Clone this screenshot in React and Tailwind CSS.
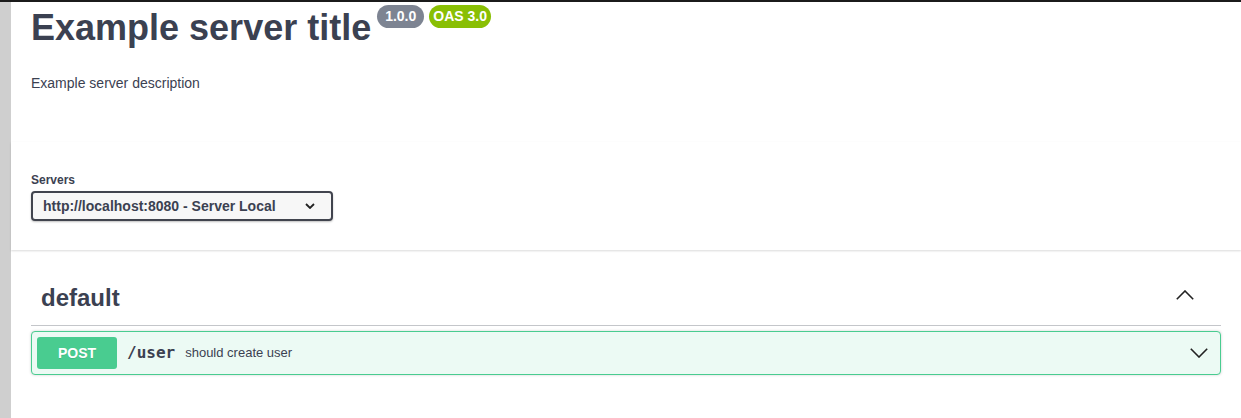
import React from 'react';

const sans = "font-['Liberation_Sans',Arial,sans-serif]";

function Chevron({ up = false, className = '' }) {
  return (
    <svg width="18" height="10" viewBox="0 0 18 10" className={className} fill="none">
      <polyline
        points={up ? '0.8,9.2 9,1 17.2,9.2' : '0.8,0.8 9,9 17.2,0.8'}
        stroke="#222"
        strokeWidth="1.6"
      />
    </svg>
  );
}

function Badge({ children, className }) {
  return (
    <span className={`inline-block rounded-full h-[23px] leading-[23px] text-center text-[14px] font-bold text-white ${className}`}>
      {children}
    </span>
  );
}

export default function App() {
  return (
    <div className={`w-[1241px] h-[418px] overflow-hidden bg-white text-[#3b4151] ${sans}`}>
      <div className="h-[2px] bg-[#1b1b1b]" />
      <div className="flex h-[416px]">
        <div className="w-[11px] bg-[#cfcfcf]" />
        <div className="flex-1">
          {/* info */}
          <div className="pl-[20px]">
            <div className="flex items-start">
              <h2 className="pt-[8px] text-[36px] leading-[36px] font-bold">Example server title</h2>
              <div className="mt-[3px] ml-[6px] flex gap-[5px]">
                <Badge className="w-[47px] bg-[#7d8492]">1.0.0</Badge>
                <Badge className="w-[62px] bg-[#89bf04]">OAS 3.0</Badge>
              </div>
            </div>
            <p className="mt-[27px] text-[14px] leading-[20px]">Example server description</p>
          </div>

          {/* servers */}
          <div className="mt-[49px] pt-[30px] pb-[29px] pl-[20px] bg-white shadow-[0_1px_2px_0_rgba(0,0,0,0.15)]">
            <div className="text-[12px] leading-[16px] font-bold">Servers</div>
            <div className="mt-[3px] flex h-[30px] w-[302px] items-center justify-between rounded-[4px] border-2 border-[#41444e] bg-[#f7f7f7] pl-[10px] pr-[16px] shadow-[0_1px_2px_0_rgba(0,0,0,0.25)]">
              <span className="text-[14px] font-bold">http://localhost:8080 - Server Local</span>
              <svg width="10" height="6" viewBox="0 0 10 6" fill="none">
                <polyline points="1,1 5,5 9,1" stroke="#222" strokeWidth="1.8" />
              </svg>
            </div>
          </div>

          {/* tag */}
          <div className="mt-[21px] px-[20px]">
            <div className="flex items-start border-b border-[rgba(59,65,81,0.3)] pt-[13px] pb-[13px] pl-[10px]">
              <h3 className="text-[24px] leading-[28px] font-bold">default</h3>
              <Chevron up className="ml-auto mr-[27px] mt-[6px]" />
            </div>

            <div className="mt-[5px] flex items-center rounded-[4px] border border-[#49cc90] bg-[#ecfaf4] p-[5px] shadow-[0_0_3px_0_rgba(0,0,0,0.19)]">
              <span className="flex h-[32px] w-[80px] items-center justify-center rounded-[3px] bg-[#49cc90] text-[14px] font-bold text-white [text-shadow:0_1px_0_rgba(0,0,0,0.1)]">
                POST
              </span>
              <span className="pl-[10px] font-['DejaVu_Sans_Mono',monospace] text-[16px] font-bold">/user</span>
              <span className="pl-[10px] text-[13px]">should create user</span>
              <Chevron className="ml-auto mr-[7px]" />
            </div>
          </div>
        </div>
      </div>
    </div>
  );
}
